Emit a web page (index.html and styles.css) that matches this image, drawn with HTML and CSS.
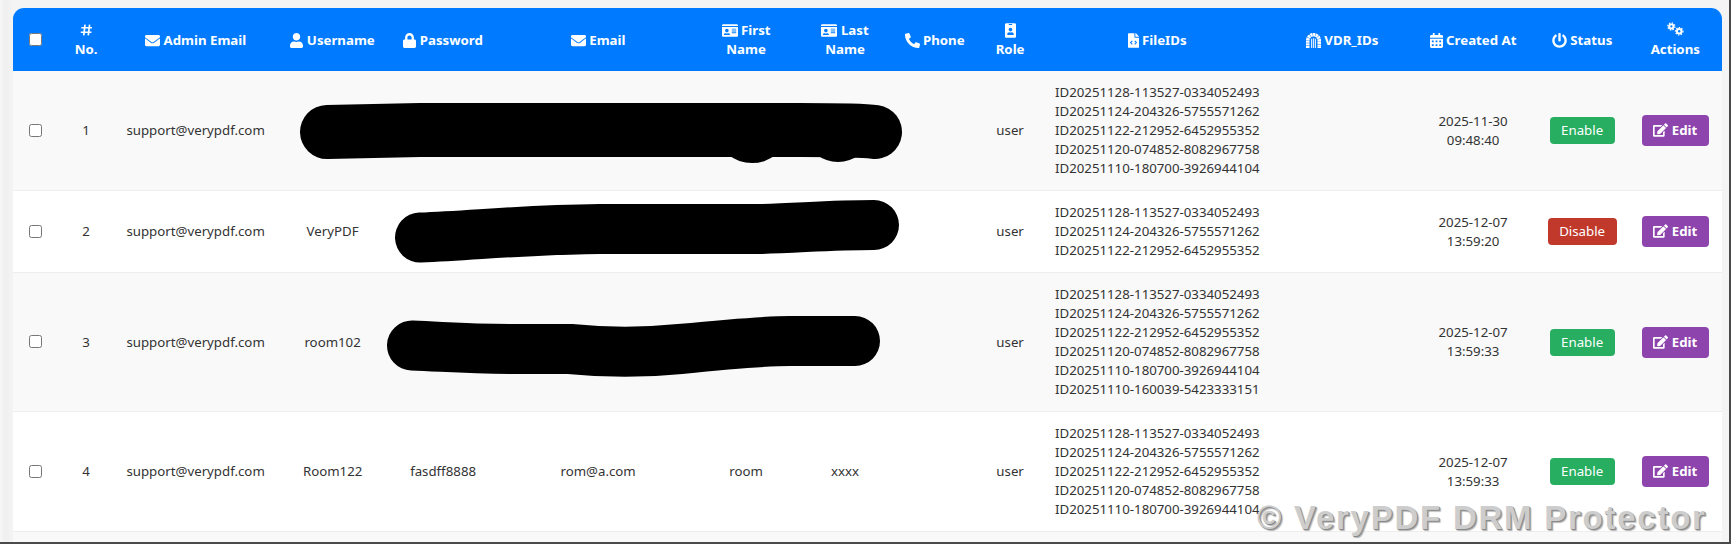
FILE: index.html
```html
<!DOCTYPE html>
<html lang="en">
<head>
<meta charset="utf-8">
<title>Users</title>
<link rel="stylesheet" href="styles.css">
</head>
<body>
<svg class="sprite" aria-hidden="true">
  <symbol id="i-mail" viewBox="0 0 512 512"><path d="M502.3 190.8c3.9-3.1 9.7-.2 9.7 4.7V400c0 26.5-21.5 48-48 48H48c-26.5 0-48-21.5-48-48V195.6c0-5 5.7-7.8 9.7-4.7 22.4 17.4 52.1 39.5 154.1 113.6 21.1 15.4 56.7 47.8 92.2 47.6 35.7.3 72-32.8 92.3-47.6 102-74.1 131.6-96.3 154-113.7zM256 320c23.2.4 56.6-29.2 73.4-41.4 132.7-96.3 142.8-104.7 173.4-128.7 5.8-4.5 9.2-11.5 9.2-18.9v-19c0-26.5-21.5-48-48-48H48C21.5 64 0 85.5 0 112v19c0 7.4 3.4 14.3 9.2 18.9 30.6 23.9 40.7 32.4 173.4 128.7 16.8 12.2 50.2 41.8 73.4 41.4z"/></symbol>
  <symbol id="i-user" viewBox="0 0 448 512"><path d="M224 256c70.7 0 128-57.3 128-128S294.7 0 224 0 96 57.3 96 128s57.3 128 128 128zm89.6 32h-16.7c-22.2 10.2-46.9 16-72.9 16s-50.6-5.8-72.9-16h-16.7C60.2 288 0 348.2 0 422.4V464c0 26.5 21.5 48 48 48h352c26.5 0 48-21.5 48-48v-41.6c0-74.2-60.2-134.4-134.4-134.4z"/></symbol>
  <symbol id="i-lock" viewBox="0 0 448 512"><path d="M400 224h-24v-72C376 68.2 307.8 0 224 0S72 68.2 72 152v72H48c-26.5 0-48 21.5-48 48v192c0 26.5 21.5 48 48 48h352c26.5 0 48-21.5 48-48V272c0-26.5-21.5-48-48-48zm-104 0H152v-72c0-39.7 32.3-72 72-72s72 32.3 72 72v72z"/></symbol>
  <symbol id="i-card" viewBox="0 0 576 512"><path d="M528 32H48C21.5 32 0 53.5 0 80v16h576V80c0-26.5-21.5-48-48-48zM0 432c0 26.5 21.5 48 48 48h480c26.5 0 48-21.5 48-48V128H0v304zm352-232c0-4.4 3.6-8 8-8h144c4.4 0 8 3.6 8 8v16c0 4.4-3.6 8-8 8H360c-4.4 0-8-3.6-8-8v-16zm0 64c0-4.4 3.6-8 8-8h144c4.4 0 8 3.6 8 8v16c0 4.4-3.6 8-8 8H360c-4.4 0-8-3.6-8-8v-16zm0 64c0-4.4 3.6-8 8-8h144c4.4 0 8 3.6 8 8v16c0 4.4-3.6 8-8 8H360c-4.4 0-8-3.6-8-8v-16zM176 192c35.3 0 64 28.7 64 64s-28.7 64-64 64-64-28.7-64-64 28.7-64 64-64zM67.1 396.2C75.5 370.5 99.6 352 128 352h8.2c12.3 5.1 25.7 8 39.8 8s27.6-2.9 39.8-8h8.2c28.4 0 52.5 18.5 60.9 44.2 3.2 9.9-5.2 19.8-15.6 19.8H82.7c-10.4 0-18.8-10-15.6-19.8z"/></symbol>
  <symbol id="i-phone" viewBox="0 0 512 512"><path d="M497.39 361.8l-112-48a24 24 0 0 0-28 6.9l-49.6 60.6A370.66 370.66 0 0 1 130.6 204.11l60.6-49.6a23.94 23.94 0 0 0 6.9-28l-48-112A24.16 24.16 0 0 0 122.6.61l-104 24A24 24 0 0 0 0 48c0 256.5 207.9 464 464 464a24 24 0 0 0 23.4-18.6l24-104a24.29 24.29 0 0 0-14.01-27.6z"/></symbol>
  <symbol id="i-badge" viewBox="0 0 384 512"><path d="M336 0H48C21.5 0 0 21.5 0 48v416c0 26.5 21.5 48 48 48h288c26.5 0 48-21.5 48-48V48c0-26.5-21.5-48-48-48zM144 32h96c8.8 0 16 7.2 16 16s-7.2 16-16 16h-96c-8.8 0-16-7.2-16-16s7.2-16 16-16zm48 128c35.3 0 64 28.7 64 64s-28.7 64-64 64-64-28.7-64-64 28.7-64 64-64zm112 236.8c0 10.6-10 19.2-22.4 19.2H102.4C90 416 80 407.4 80 396.8v-19.2c0-31.8 30.1-57.6 67.2-57.6h5c12.3 5.1 25.7 8 39.8 8s27.6-2.9 39.8-8h5c37.1 0 67.2 25.8 67.2 57.6v19.2z"/></symbol>
  <symbol id="i-file" viewBox="0 0 384 512"><path d="M384 121.941V128H256V0h6.059c6.365 0 12.47 2.529 16.971 7.029l97.941 97.941A24.005 24.005 0 0 1 384 121.941zM248 160c-13.2 0-24-10.8-24-24V0H24C10.745 0 0 10.745 0 24v464c0 13.255 10.745 24 24 24h336c13.255 0 24-10.745 24-24V160H248z"/><path class="cut" d="M150 270l-60 60 60 60M234 270l60 60-60 60"/></symbol>
  <symbol id="i-arch" viewBox="0 0 512 512"><path class="arch" d="M60 512V256a196 196 0 0 1 392 0V512"/><path class="bars" d="M190 200V512M256 180V512M322 200V512"/></symbol>
  <symbol id="i-cal" viewBox="0 0 448 512"><path d="M0 464c0 26.5 21.5 48 48 48h352c26.5 0 48-21.5 48-48V192H0v272zm320-196c0-6.6 5.4-12 12-12h40c6.6 0 12 5.4 12 12v40c0 6.6-5.4 12-12 12h-40c-6.6 0-12-5.4-12-12v-40zm0 128c0-6.6 5.4-12 12-12h40c6.6 0 12 5.4 12 12v40c0 6.6-5.4 12-12 12h-40c-6.6 0-12-5.4-12-12v-40zM192 268c0-6.6 5.4-12 12-12h40c6.6 0 12 5.4 12 12v40c0 6.6-5.4 12-12 12h-40c-6.6 0-12-5.4-12-12v-40zm0 128c0-6.6 5.4-12 12-12h40c6.6 0 12 5.4 12 12v40c0 6.6-5.4 12-12 12h-40c-6.6 0-12-5.4-12-12v-40zM64 268c0-6.6 5.4-12 12-12h40c6.6 0 12 5.4 12 12v40c0 6.6-5.4 12-12 12H76c-6.6 0-12-5.4-12-12v-40zm0 128c0-6.6 5.4-12 12-12h40c6.6 0 12 5.4 12 12v40c0 6.6-5.4 12-12 12H76c-6.6 0-12-5.4-12-12v-40zM400 64h-48V16c0-8.8-7.2-16-16-16h-32c-8.8 0-16 7.2-16 16v48H160V16c0-8.8-7.2-16-16-16h-32c-8.8 0-16 7.2-16 16v48H48C21.5 64 0 85.5 0 112v48h448v-48c0-26.5-21.5-48-48-48z"/></symbol>
  <symbol id="i-power" viewBox="0 0 512 512"><path d="M400 54.1c63 45 104 118.6 104 201.9 0 136.8-110.8 247.7-247.5 248C120 504.3 8.2 393 8 256.4 7.9 173.1 48.9 99.3 111.8 54.2c11.7-8.3 28-4.8 35 7.7L162.6 90c5.9 10.5 3.1 23.8-6.6 31-41.5 30.8-68 79.6-68 134.9-.1 92.3 74.5 168.1 168 168.1 91.6 0 168.6-74.2 168-169.1-.3-51.8-24.7-101.8-68.1-134-9.7-7.2-12.4-20.5-6.4-30.9l15.8-28.1c7-12.4 23.2-16.1 34.8-7.8zM296 264V24c0-13.3-10.7-24-24-24h-32c-13.3 0-24 10.7-24 24v240c0 13.3 10.7 24 24 24h32c13.3 0 24-10.7 24-24z"/></symbol>
  <symbol id="i-cogs" viewBox="0 0 640 480"><g class="gear"><circle class="ring" cx="190" cy="150" r="75"/><circle class="teeth" cx="190" cy="150" r="125"/><circle class="ring" cx="470" cy="320" r="80"/><circle class="teeth" cx="470" cy="320" r="132"/></g></symbol>
  <symbol id="i-hash" viewBox="0 0 448 448"><path class="hash" d="M170 20L120 428M340 20L290 428M30 140H430M10 308H410"/></symbol>
  <symbol id="i-edit" viewBox="0 0 576 512"><path d="M402.6 83.2l90.2 90.2c3.8 3.8 3.8 10 0 13.8L274.4 405.6l-92.8 10.3c-12.4 1.4-22.9-9.1-21.5-21.5l10.3-92.8L388.8 83.2c3.8-3.8 10-3.8 13.8 0zm162-22.9l-48.8-48.8c-15.2-15.2-39.9-15.2-55.2 0l-35.4 35.4c-3.8 3.8-3.8 10 0 13.8l90.2 90.2c3.8 3.8 10 3.8 13.8 0l35.4-35.4c15.2-15.3 15.2-40 0-55.2zM384 346.2V448H64V128h229.8c3.2 0 6.2-1.3 8.5-3.5l40-40c7.6-7.6 2.2-20.5-8.5-20.5H48C21.5 64 0 85.5 0 112v352c0 26.5 21.5 48 48 48h352c26.5 0 48-21.5 48-48V306.2c0-10.7-12.9-16-20.5-8.5l-40 40c-2.2 2.3-3.5 5.3-3.5 8.5z"/></symbol>
</svg>

<div class="frame">
  <div class="panel">
    <table class="grid">
      <colgroup>
        <col class="c-check"><col class="c-no"><col class="c-admin"><col class="c-user"><col class="c-pass"><col class="c-email"><col class="c-first"><col class="c-last"><col class="c-phone"><col class="c-role"><col class="c-files"><col class="c-vdr"><col class="c-date"><col class="c-status"><col class="c-actions">
      </colgroup>
      <thead>
        <tr>
          <th><input type="checkbox" class="check"></th>
          <th><svg class="ico hash-ico"><use href="#i-hash"/></svg><br>No.</th>
          <th><svg class="ico wide"><use href="#i-mail"/></svg> Admin Email</th>
          <th><svg class="ico narrow"><use href="#i-user"/></svg> Username</th>
          <th><svg class="ico narrow"><use href="#i-lock"/></svg> Password</th>
          <th><svg class="ico wide"><use href="#i-mail"/></svg> Email</th>
          <th><svg class="ico card"><use href="#i-card"/></svg> First<br>Name</th>
          <th><svg class="ico card"><use href="#i-card"/></svg> Last<br>Name</th>
          <th><svg class="ico wide"><use href="#i-phone"/></svg> Phone</th>
          <th><svg class="ico badge"><use href="#i-badge"/></svg><br>Role</th>
          <th><svg class="ico badge"><use href="#i-file"/></svg> FileIDs</th>
          <th><svg class="ico wide"><use href="#i-arch"/></svg> VDR_IDs</th>
          <th><svg class="ico narrow"><use href="#i-cal"/></svg> Created At</th>
          <th><svg class="ico wide"><use href="#i-power"/></svg> Status</th>
          <th class="actions"><svg class="ico cogs"><use href="#i-cogs"/></svg><br>Actions</th>
        </tr>
      </thead>
      <tbody>
        <tr>
          <td><input type="checkbox" class="check"></td>
          <td>1</td>
          <td>support@verypdf.com</td>
          <td></td><td></td><td></td><td></td><td></td><td></td>
          <td>user</td>
          <td class="ids">ID20251128-113527-0334052493<br>ID20251124-204326-5755571262<br>ID20251122-212952-6452955352<br>ID20251120-074852-8082967758<br>ID20251110-180700-3926944104</td>
          <td></td>
          <td>2025-11-30<br>09:48:40</td>
          <td><button class="btn enable">Enable</button></td>
          <td class="actions"><button class="btn edit"><svg class="ico edit-ico"><use href="#i-edit"/></svg> Edit</button></td>
        </tr>
        <tr>
          <td><input type="checkbox" class="check"></td>
          <td>2</td>
          <td>support@verypdf.com</td>
          <td>VeryPDF</td><td></td><td></td><td></td><td></td><td></td>
          <td>user</td>
          <td class="ids">ID20251128-113527-0334052493<br>ID20251124-204326-5755571262<br>ID20251122-212952-6452955352</td>
          <td></td>
          <td>2025-12-07<br>13:59:20</td>
          <td><button class="btn disable">Disable</button></td>
          <td class="actions"><button class="btn edit"><svg class="ico edit-ico"><use href="#i-edit"/></svg> Edit</button></td>
        </tr>
        <tr>
          <td><input type="checkbox" class="check"></td>
          <td>3</td>
          <td>support@verypdf.com</td>
          <td>room102</td><td></td><td></td><td></td><td></td><td></td>
          <td>user</td>
          <td class="ids">ID20251128-113527-0334052493<br>ID20251124-204326-5755571262<br>ID20251122-212952-6452955352<br>ID20251120-074852-8082967758<br>ID20251110-180700-3926944104<br>ID20251110-160039-5423333151</td>
          <td></td>
          <td>2025-12-07<br>13:59:33</td>
          <td><button class="btn enable">Enable</button></td>
          <td class="actions"><button class="btn edit"><svg class="ico edit-ico"><use href="#i-edit"/></svg> Edit</button></td>
        </tr>
        <tr>
          <td><input type="checkbox" class="check"></td>
          <td>4</td>
          <td>support@verypdf.com</td>
          <td>Room122</td>
          <td>fasdff8888</td>
          <td>rom@a.com</td>
          <td>room</td>
          <td>xxxx</td>
          <td></td>
          <td>user</td>
          <td class="ids">ID20251128-113527-0334052493<br>ID20251124-204326-5755571262<br>ID20251122-212952-6452955352<br>ID20251120-074852-8082967758<br>ID20251110-180700-3926944104</td>
          <td></td>
          <td>2025-12-07<br>13:59:33</td>
          <td><button class="btn enable">Enable</button></td>
          <td class="actions"><button class="btn edit"><svg class="ico edit-ico"><use href="#i-edit"/></svg> Edit</button></td>
        </tr>
      </tbody>
    </table>
  </div>

  <svg class="scribble" viewBox="0 0 1732 547" aria-hidden="true">
    <path class="thick" d="M327 132L420 130L800 130C840 130 860 130 875 132"/>
    <ellipse class="lump" cx="752" cy="136" rx="33" ry="27"/>
    <ellipse class="lump" cx="838" cy="136" rx="30" ry="26"/>
    <path d="M420 237.5C480 235 520 230 600 229L760 229C800 228 830 225 874 225"/>
    <path d="M412 345.5C450 347 470 349 520 349L570 349C600 352 640 353 680 349C720 345 760 341 790 341L855 341"/>
  </svg>
  <div class="watermark">© VeryPDF DRM Protector</div>
</div>
</body>
</html>
```
FILE: styles.css
```css
* { box-sizing: border-box; }
html, body { margin: 0; padding: 0; background: #fff; }
body { width: 1732px; height: 547px; overflow: hidden; font-family: "Noto Sans", "Open Sans", sans-serif; }

.sprite { position: absolute; width: 0; height: 0; }
.cut { fill: none; stroke: #007bff; stroke-width: 36; }
.arch { fill: none; stroke: currentColor; stroke-width: 120; stroke-dasharray: 76 14; }
.bars { fill: none; stroke: currentColor; stroke-width: 40; opacity: .85; }
.ring { fill: none; stroke: currentColor; stroke-width: 70; }
.teeth { fill: none; stroke: currentColor; stroke-width: 46; stroke-dasharray: 50 48; }
.hash { fill: none; stroke: currentColor; stroke-width: 62; }

.frame {
  position: relative;
  width: 1731px;
  height: 544px;
  padding: 8px 7px 0 13px;
  background: linear-gradient(90deg, #f7f7f7 0, #efefef 5px, #f4f4f4 13px);
  border-right: 2px solid #4a4a4a;
  border-bottom: 2px solid #4a4a4a;
  overflow: hidden;
}

.panel {
  width: 1709px;
  height: 600px;
  background: #f9f9f9;
  border-radius: 11px 11px 0 0;
  overflow: hidden;
}

.grid {
  table-layout: fixed;
  width: 1709px;
  border-collapse: separate;
  border-spacing: 0;
  font-size: 13.25px;
  line-height: 19px;
  color: #333;
}

.c-check { width: 44.6px; }
.c-no { width: 57px; }
.c-admin { width: 162px; }
.c-user { width: 112px; }
.c-pass { width: 109px; }
.c-email { width: 201px; }
.c-first { width: 95px; }
.c-last { width: 103px; }
.c-phone { width: 76px; }
.c-role { width: 75px; }
.c-files { width: 219px; }
.c-vdr { width: 151px; }
.c-date { width: 111px; }
.c-status { width: 107px; }
.c-actions { width: 86.4px; }

th {
  height: 63px;
  padding: 13px 2px 12px;
  background: #007bff;
  color: #fff;
  font-weight: 700;
  text-align: center;
  vertical-align: middle;
}

td {
  padding: 12px 2px;
  text-align: center;
  vertical-align: middle;
  border-bottom: 1px solid #eee;
}

tbody tr:nth-child(even) td { background: #fff; }
tbody tr:nth-child(odd) td { background: #f9f9f9; }

td.ids { padding-left: 7.4px; text-align: left; white-space: nowrap; }
.actions { padding-right: 9px; }

.check { width: 13px; height: 13px; margin: 0; vertical-align: middle; }
th .check { margin-bottom: 3px; }
td .check { margin-bottom: 2px; }

.ico { fill: currentColor; vertical-align: -2px; width: 14px; height: 14px; }
.ico.wide { width: 15px; height: 15px; vertical-align: -3px; }
.ico.narrow { width: 13px; height: 15px; vertical-align: -3px; }
.ico.card { width: 16px; height: 15px; vertical-align: -3px; }
.ico.badge { width: 11px; height: 15px; vertical-align: -3px; }
.ico.cogs { width: 18px; height: 14px; vertical-align: -1px; }
.ico.hash-ico { width: 13px; height: 12px; vertical-align: -1px; }
.ico.edit-ico { width: 15px; height: 14px; vertical-align: -2px; }

.btn {
  border: 0;
  border-radius: 4px;
  color: #fff;
  font-family: inherit;
  font-size: 13.25px;
  line-height: 19px;
  padding: 4px 0;
  vertical-align: middle;
  text-align: center;
}
.enable { width: 65px; height: 27px; background: #27ae60; }
.disable { width: 69px; height: 27px; background: #c0392b; }
.edit { width: 67px; height: 31px; background: #8e44ad; font-weight: 700; padding: 6px 0; }

.scribble {
  position: absolute;
  left: 0;
  top: 0;
  width: 1732px;
  height: 547px;
  pointer-events: none;
  fill: none;
  stroke: #000;
  stroke-width: 50;
  stroke-linecap: round;
  stroke-linejoin: round;
}
.scribble .thick { stroke-width: 54; }
.scribble .lump { fill: #000; stroke: none; }

.watermark {
  position: absolute;
  left: 1257px;
  top: 500px;
  font-family: "Liberation Sans", Arial, sans-serif;
  font-size: 33px;
  line-height: 36px;
  font-weight: 700;
  letter-spacing: 1.75px;
  white-space: nowrap;
  color: #cdcdcd;
  text-shadow: 1px 1px 0 #8a8a8a, 2px 2px 1px #b5b5b5;
}
```
